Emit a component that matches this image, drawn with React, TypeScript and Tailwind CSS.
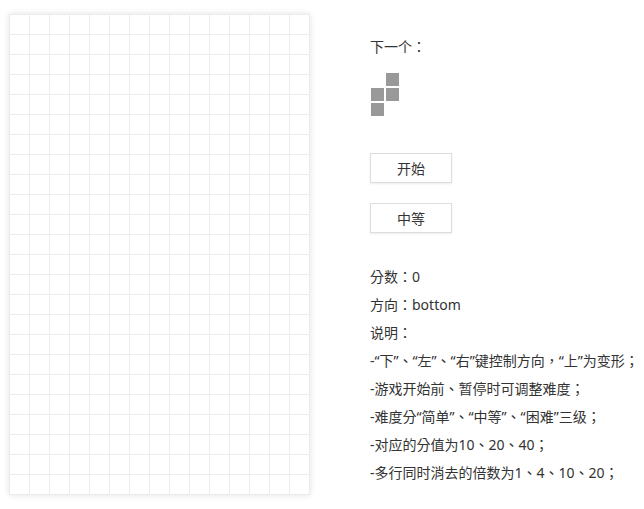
import React from "react";

const COLS = 15;
const ROWS = 24;

const nextShape = [
  [0, 1],
  [1, 1],
  [1, 0],
];

const notes = [
  "-“下”、“左”、“右”键控制方向，“上”为变形；",
  "-游戏开始前、暂停时可调整难度；",
  "-难度分“简单”、“中等”、“困难”三级；",
  "-对应的分值为10、20、40；",
  "-多行同时消去的倍数为1、4、10、20；",
];

export default function App() {
  return (
    <div
      className="flex w-[644px] h-[509px] bg-white text-[#333] text-[14px] overflow-hidden"
      style={{ fontFamily: '"Noto Sans", "Noto Sans CJK TC", sans-serif' }}
    >
      <div className="ml-[9px] mt-[14px] self-start shadow-[0_0_6px_rgba(0,0,0,0.12)]">
        <div className="grid grid-cols-[repeat(15,20px)] border-l border-t border-[#ececec]">
          {Array.from({ length: COLS * ROWS }).map((_, i) => (
            <div key={i} className="w-5 h-5 border-r border-b border-[#ececec]" />
          ))}
        </div>
      </div>

      <div className="ml-[60px] pt-[37px] flex flex-col">
        <div className="leading-[20px]">下一个：</div>
        <div className="mt-[15px] flex flex-col">
          {nextShape.map((row, r) => (
            <div key={r} className="flex">
              {row.map((on, c) => (
                <div
                  key={c}
                  className={`w-[15px] h-[15px] ${on ? "bg-[#999] border border-white" : ""}`}
                />
              ))}
            </div>
          ))}
        </div>

        <button className="mt-[36px] w-[82px] h-[30px] bg-white border border-[#ddd] shadow-[0_1px_2px_rgba(0,0,0,0.08)] text-[14px] text-[#333]">
          开始
        </button>
        <button className="mt-[20px] w-[82px] h-[30px] bg-white border border-[#ddd] shadow-[0_1px_2px_rgba(0,0,0,0.08)] text-[14px] text-[#333]">
          中等
        </button>

        <div className="mt-[30px] flex flex-col leading-[28px] whitespace-nowrap">
          <div>分数：0</div>
          <div>方向：bottom</div>
          <div>说明：</div>
          {notes.map((n, i) => (
            <div key={i}>{n}</div>
          ))}
        </div>
      </div>
    </div>
  );
}
